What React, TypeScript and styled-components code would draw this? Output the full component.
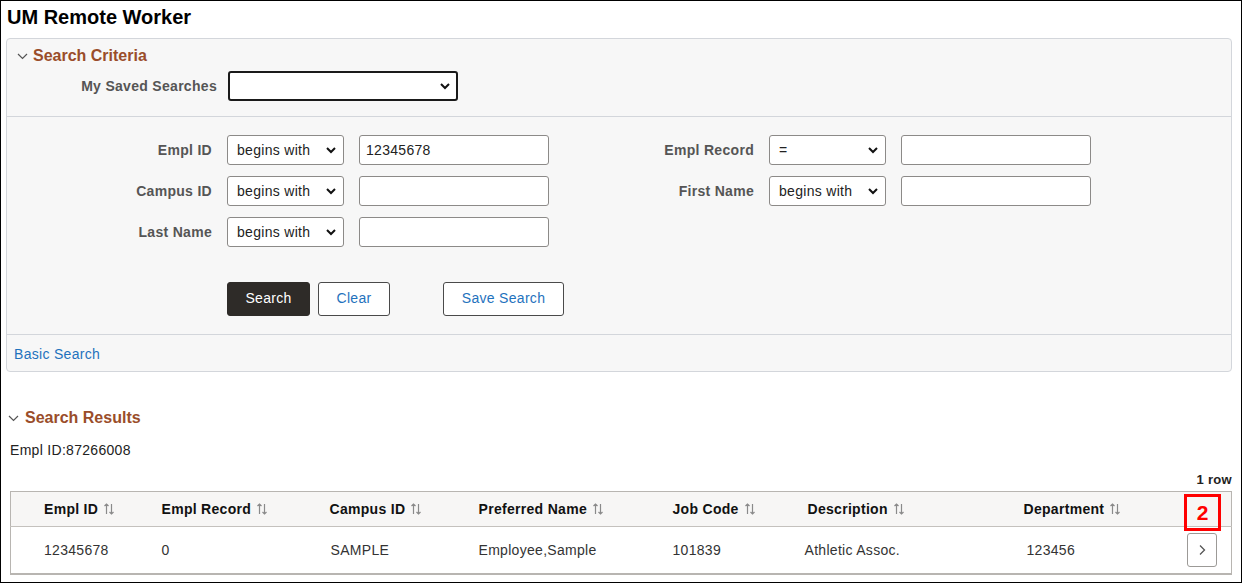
import React from 'react'
import styled, { createGlobalStyle } from 'styled-components'

const GlobalStyle = createGlobalStyle`
    * { box-sizing: border-box; }
    body {
        margin: 0;
        font-family: 'Liberation Sans', Arial, sans-serif;
        letter-spacing: 0.3px;
        background: #fff;
    }
    input, select, button {
        letter-spacing: 0.3px;
    }
`

const Frame = styled.div`
    width: 1242px;
    height: 583px;
    border: 1px solid #000;
    overflow: hidden;
`

const Title = styled.h1`
    margin: 0;
    padding: 5px 0 0 6px;
    font-size: 20px;
    line-height: 22px;
    font-weight: bold;
    letter-spacing: 0;
    color: #000;
`

const Panel = styled.section`
    margin: 10px 9px 0 5px;
    background: #f7f7f7;
    border: 1px solid #d3d6db;
    border-radius: 4px;
`

const SectionHeader = styled.div<{ $inset: number }>`
    display: flex;
    align-items: center;
    gap: 5px;
    padding-left: ${({ $inset }) => $inset}px;
    font-size: 16px;
    line-height: 20px;
    font-weight: bold;
    letter-spacing: 0;
    color: #9a4d2a;
`

const CriteriaHeader = styled(SectionHeader)`
    padding-top: 7px;
`

const SavedRow = styled.div`
    display: flex;
    align-items: center;
    gap: 11px;
    margin-top: 5px;
    padding-bottom: 15px;
    border-bottom: 1px solid #d3d6db;
`

const Label = styled.label<{ $width?: number }>`
    width: ${({ $width }) => ($width ? `${$width}px` : 'auto')};
    text-align: right;
    font-size: 14px;
    font-weight: bold;
    color: #555;
`

const SelectWrap = styled.span<{ $width: number }>`
    position: relative;
    display: inline-block;
    width: ${({ $width }) => $width}px;
    height: 30px;
`

const Select = styled.select<{ $strong?: boolean }>`
    appearance: none;
    width: 100%;
    height: 100%;
    padding: 0 24px 0 9px;
    font-family: 'Liberation Sans', Arial, sans-serif;
    font-size: 14px;
    color: #222;
    background: #fff;
    border: ${({ $strong }) => ($strong ? '2px solid #1a1a1a' : '1px solid #8c8a88')};
    border-radius: 3px;
`

const Caret = styled.svg`
    position: absolute;
    right: 8px;
    top: 12px;
    pointer-events: none;
`

const TextInput = styled.input`
    width: 190px;
    height: 30px;
    padding: 0 6px;
    font-family: 'Liberation Sans', Arial, sans-serif;
    font-size: 14px;
    color: #222;
    background: #fff;
    border: 1px solid #8c8a88;
    border-radius: 3px;
`

const FieldGrid = styled.div`
    display: grid;
    grid-template-columns: 205px 117px 190px 190px 117px 190px;
    column-gap: 15px;
    row-gap: 11px;
    align-items: center;
    padding-top: 18px;
`

const Spacer = styled.span`
    grid-column: span 3;
`

const ButtonRow = styled.div`
    display: flex;
    align-items: center;
    gap: 8px;
    margin-top: 35px;
    padding: 0 0 18px 220px;
    border-bottom: 1px solid #d3d6db;
`

const Button = styled.button<{ $primary?: boolean; $width: number; $gapBefore?: number }>`
    width: ${({ $width }) => $width}px;
    height: 34px;
    margin-left: ${({ $gapBefore }) => $gapBefore ?? 0}px;
    padding: 0 0 2px;
    font-family: 'Liberation Sans', Arial, sans-serif;
    font-size: 14px;
    border-radius: 3px;
    cursor: pointer;
    color: ${({ $primary }) => ($primary ? '#fff' : '#1f72bd')};
    background: ${({ $primary }) => ($primary ? '#2e2b28' : '#fff')};
    border: 1px solid ${({ $primary }) => ($primary ? '#2e2b28' : '#4a4a4a')};
`

const FooterLink = styled.a`
    display: block;
    padding: 11px 7px 8px;
    font-size: 14px;
    line-height: 17px;
    color: #1f72bd;
    text-decoration: none;
`

const ResultsHeader = styled(SectionHeader)`
    margin-top: 36px;
    gap: 6px;
`

const ResultLine = styled.div`
    margin-top: 12px;
    padding-left: 9px;
    font-size: 14px;
    line-height: 20px;
    color: #222;
`

const RowCount = styled.div`
    margin: 12px 9px 0 0;
    text-align: right;
    font-size: 13px;
    line-height: 16px;
    font-weight: bold;
    color: #222;
`

const TableWrap = styled.div`
    position: relative;
    margin: 3px 9px 0 9px;
`

const Table = styled.table`
    width: 100%;
    table-layout: fixed;
    border-collapse: collapse;
    border: 1px solid #b8b5b1;
    border-bottom-width: 2px;
`

const Th = styled.th`
    height: 35px;
    padding: 0 0 0 10px;
    text-align: left;
    font-size: 14px;
    font-weight: bold;
    color: #111;
    background: #f7f6f5;
    border-bottom: 1px solid #c4c1bd;
    white-space: nowrap;
    &:first-child { padding-left: 33px; }
`

const Td = styled.td<{ $shift?: number }>`
    height: 47px;
    padding: 0 0 0 ${({ $shift }) => 10 + ($shift ?? 0)}px;
    font-size: 14px;
    color: #333;
    &:first-child { padding-left: 33px; }
`

const SortIcon = styled.svg`
    margin-left: 5px;
    vertical-align: -1px;
`

const RowButton = styled.button`
    display: flex;
    align-items: center;
    justify-content: center;
    width: 30px;
    height: 34px;
    margin-left: 7px;
    padding: 0;
    background: #fff;
    border: 1px solid #9c9a97;
    border-radius: 3px;
`

const Annotation = styled.div`
    position: absolute;
    left: 1174px;
    top: 3px;
    width: 37px;
    height: 37px;
    display: flex;
    align-items: center;
    justify-content: center;
    border: 3px solid #f00;
    color: #f00;
    font-size: 21px;
    font-weight: bold;
    letter-spacing: 0;
`

const Chevron = () => (
    <svg width="11" height="7" viewBox="0 0 11 7">
        <path d="M1 1l4.5 4.5L10 1" fill="none" stroke="#555" strokeWidth="1.2" />
    </svg>
)

const Sort = () => (
    <SortIcon width="12" height="12" viewBox="0 0 12 12">
        <path d="M3.5 11V1M1.5 3l2-2 2 2M8.5 1v10M6.5 9l2 2 2-2" fill="none" stroke="#8a8a8a" strokeWidth="1.2" />
    </SortIcon>
)

const Dropdown: React.FC<{ width: number; value?: string; strong?: boolean }> = ({ width, value = '', strong }) => (
    <SelectWrap $width={width}>
        <Select $strong={strong} defaultValue={value}>
            <option value={value}>{value}</option>
        </Select>
        <Caret width="10" height="7" viewBox="0 0 10 7">
            <path d="M1 1l4 4 4-4" fill="none" stroke="#111" strokeWidth="2" />
        </Caret>
    </SelectWrap>
)

type Field = { label: string; op: string; value?: string }

const leftFields: Field[] = [
    { label: 'Empl ID', op: 'begins with', value: '12345678' },
    { label: 'Campus ID', op: 'begins with' },
    { label: 'Last Name', op: 'begins with' },
]

const rightFields: (Field | null)[] = [
    { label: 'Empl Record', op: '=' },
    { label: 'First Name', op: 'begins with' },
    null,
]

const columns = [
    { name: 'Empl ID', width: 141 },
    { name: 'Empl Record', width: 168 },
    { name: 'Campus ID', width: 149 },
    { name: 'Preferred Name', width: 194 },
    { name: 'Job Code', width: 135 },
    { name: 'Description', width: 216 },
    { name: 'Department', width: 156 },
]

const row = [
    { v: '12345678' },
    { v: '0' },
    { v: 'SAMPLE', shift: 1 },
    { v: 'Employee,Sample' },
    { v: '101839' },
    { v: 'Athletic Assoc.', shift: -3 },
    { v: '123456', shift: 3 },
]

const FieldCells: React.FC<{ field: Field }> = ({ field }) => (
    <>
        <Label>{field.label}</Label>
        <Dropdown width={117} value={field.op} />
        <TextInput defaultValue={field.value ?? ''} />
    </>
)

export default function App() {
    return (
        <Frame>
            <GlobalStyle />
            <Title>UM Remote Worker</Title>
            <Panel>
                <CriteriaHeader $inset={10}>
                    <Chevron />
                    Search Criteria
                </CriteriaHeader>
                <SavedRow>
                    <Label $width={210}>My Saved Searches</Label>
                    <Dropdown width={230} strong />
                </SavedRow>
                <FieldGrid>
                    {leftFields.map((field, i) => {
                        const right = rightFields[i]
                        return (
                            <React.Fragment key={field.label}>
                                <FieldCells field={field} />
                                {right ? <FieldCells field={right} /> : <Spacer />}
                            </React.Fragment>
                        )
                    })}
                </FieldGrid>
                <ButtonRow>
                    <Button $primary $width={83}>Search</Button>
                    <Button $width={72}>Clear</Button>
                    <Button $width={121} $gapBefore={45}>Save Search</Button>
                </ButtonRow>
                <FooterLink href="#">Basic Search</FooterLink>
            </Panel>
            <ResultsHeader $inset={7}>
                <Chevron />
                Search Results
            </ResultsHeader>
            <ResultLine>Empl ID:87266008</ResultLine>
            <RowCount>1 row</RowCount>
            <TableWrap>
                <Table>
                    <colgroup>
                        {columns.map(c => (
                            <col key={c.name} style={{ width: c.width }} />
                        ))}
                        <col />
                    </colgroup>
                    <thead>
                        <tr>
                            {columns.map(c => (
                                <Th key={c.name}>
                                    {c.name}
                                    <Sort />
                                </Th>
                            ))}
                            <Th />
                        </tr>
                    </thead>
                    <tbody>
                        <tr>
                            {row.map((cell, i) => (
                                <Td key={i} $shift={cell.shift}>{cell.v}</Td>
                            ))}
                            <Td>
                                <RowButton aria-label="Open row">
                                    <svg width="8" height="12" viewBox="0 0 8 12">
                                        <path d="M2 1.5L6.5 6 2 10.5" fill="none" stroke="#555" strokeWidth="1.3" />
                                    </svg>
                                </RowButton>
                            </Td>
                        </tr>
                    </tbody>
                </Table>
                <Annotation>2</Annotation>
            </TableWrap>
        </Frame>
    )
}
